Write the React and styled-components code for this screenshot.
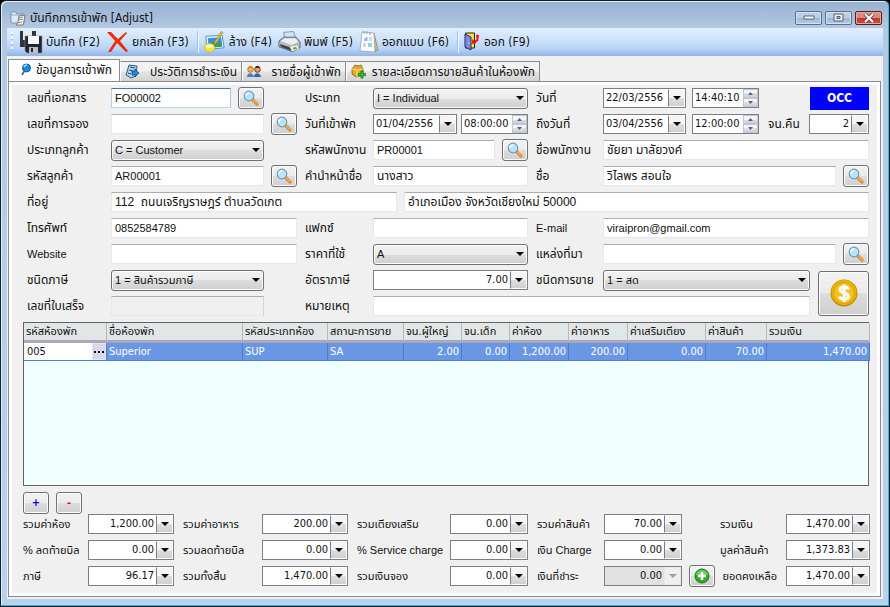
import React from 'react';
import styled, { createGlobalStyle, css } from 'styled-components';

const tahoma = "'DejaVu Sans Condensed', 'Noto Sans Thai', 'Noto Sans', sans-serif";
const arial = "'Liberation Sans', 'Noto Sans Thai', 'Noto Sans', sans-serif";

const GlobalStyle = createGlobalStyle`
  * {
    box-sizing: border-box;
  }

  body {
    margin: 0;
    background: #000;
    font-family: ${arial};
    font-size: 11px;
    line-height: 16px;
    color: #111;
  }

  button,
  input,
  select {
    margin: 0;
    padding: 0;
    border-radius: 0;
    font: inherit;
    color: inherit;
  }

  svg {
    display: block;
    flex: none;
  }
`;

const WindowFrame = styled.div`
  display: flex;
  flex-direction: column;
  min-height: 100vh;
  padding: 0 6px 7px;
  border: 1px solid #10202c;
  border-radius: 6px 6px 0 0;
  box-shadow: inset -1px -1px 0 #38b8d8, inset 1px 1px 0 #e4eef8;
  background: linear-gradient(#97b1d1, #b4cae3 28px, #b9d1ea);
`;

const TitleBar = styled.header`
  display: flex;
  align-items: center;
  gap: 4px;
  height: 27px;
  padding: 6px 1px 0 3px;

  h1 {
    flex: 1;
    margin: 0;
    font-family: ${tahoma};
    font-size: 12px;
    font-weight: normal;
    line-height: 16px;
    white-space: nowrap;
  }
`;

const CaptionButtons = styled.div`
  display: flex;
  gap: 3px;
`;

const CaptionButton = styled.button`
  display: flex;
  align-items: center;
  justify-content: center;
  width: 27px;
  height: 14px;
  border: 1px solid ${p => (p.$close ? '#5c1a1a' : '#56708f')};
  border-radius: 2px;
  box-shadow: inset 0 0 0 1px ${p => (p.$close ? '#e8a79d' : '#d3e1f0')};
  background: ${p =>
    p.$close
      ? 'linear-gradient(#d98b80 50%, #b93a2b 50%, #c8513d)'
      : 'linear-gradient(#bccfe4 50%, #9cb7d4 50%, #b5cce5)'};
`;

const Client = styled.main`
  flex: 1;
  display: flex;
  flex-direction: column;
  background: #f0f0f0;
`;

const Toolbar = styled.nav`
  display: flex;
  align-items: center;
  height: 28px;
  padding-left: 4px;
  background: linear-gradient(#e2efff, #c9dffa 50%, #b6d2f6 75%, #92b4e8);
`;

const Grip = styled.span`
  width: 2px;
  height: 20px;
  margin-right: 6px;
  background: repeating-linear-gradient(#f6faff 0 2px, #a7bcd9 2px 3px, transparent 3px 5px);
`;

const ToolDivider = styled.span`
  width: 1px;
  height: 22px;
  margin: 0 4px 0 3px;
  background: #f5f9ff;
  box-shadow: -1px 0 0 #a9c0e2;
`;

const ToolButton = styled.button`
  display: flex;
  align-items: center;
  gap: 3px;
  height: 26px;
  margin-right: 6px;
  border: 0;
  background: none;
  font-family: ${tahoma};
  font-size: 12px;
  white-space: nowrap;
`;

const TabStrip = styled.div`
  display: flex;
  align-items: flex-end;
  height: 25px;
  padding-left: 1px;
`;

const Tab = styled.button`
  display: flex;
  align-items: center;
  justify-content: space-between;
  width: ${p => p.$width}px;
  height: 20px;
  padding: 0 4px;
  border: 1px solid #898c95;
  border-left-color: #fff;
  border-bottom: 0;
  background: linear-gradient(#f2f2f2 45%, #e2e2e2 55%, #d3d3d3);
  font-family: ${tahoma};
  font-size: 12px;
  white-space: nowrap;

  ${p =>
    p.$active &&
    css`
      height: 23px;
      padding: 0 7px 2px 11px;
      margin-bottom: -1px;
      border-left-color: #898c95;
      background: #fff;
    `}
`;

const Panel = styled.section`
  flex: 1;
  display: flex;
  flex-direction: column;
  margin: 0 2px 2px 1px;
  padding: 2px 6px 7px 14px;
  border: 1px solid #898c95;
  box-shadow: inset 0 0 0 3px #fff;
`;

const Form = styled.form`
  display: grid;
  grid-template-columns: 84px 186fr 76px 155fr 75px 207fr 59px;
  grid-auto-rows: 26px;
  padding: 1px 5px 0 4px;
  margin-bottom: 3px;
`;

const Label = styled.label`
  align-self: center;
  padding-left: ${p => p.$indent || 0}px;
  font-size: ${p => (p.$latin ? 11 : 12)}px;
  white-space: nowrap;
`;

const Cell = styled.div`
  grid-column: ${p => p.$column};
  display: flex;
  align-items: center;
  gap: ${p => p.$gap || 7}px;
  padding-right: ${p => p.$end || 0}px;
  min-width: 0;
`;

const PushRight = styled.span`
  display: flex;
  margin-left: auto;
`;

const TextInput = styled.input`
  flex: 1;
  min-width: 0;
  height: 20px;
  padding: 0 3px;
  border: 1px solid #e3e9ef;
  border-top-color: #abadb3;
  background: #fff;
  font-size: ${p => (p.$thai ? 12 : 11)}px;

  &:disabled {
    background: #f0f0f0;
    border-right-color: #d0d5dc;
  }

  ${p =>
    p.$focused &&
    css`
      border-color: #3d7bad #a4c9e3 #b7d9ed #b5cfe7;
    `}
`;

const AddressLine = styled(TextInput)`
  flex: ${p => p.$grow} 1 0;
`;

const raised = css`
  border: 1px solid #707070;
  border-radius: 3px;
  box-shadow: inset 0 0 0 1px #fcfcfc;
  background: linear-gradient(#f2f2f2, #ebebeb 50%, #dddddd 50%, #cfcfcf);
`;

const PushButton = styled.button`
  ${raised}
  display: flex;
  align-items: center;
  justify-content: center;
  flex: none;
  width: 26px;
  height: 22px;
  font-family: ${tahoma};
  font-weight: bold;
  color: ${p => p.$color || '#111'};
`;

const MoneyButton = styled(PushButton)`
  grid-column: 7;
  grid-row: 8 / 10;
  place-self: center end;
  width: 51px;
  height: 45px;
`;

const SelectBox = styled.span`
  flex: 1;
  display: grid;
  min-width: 0;

  > * {
    grid-area: 1 / 1;
  }

  svg {
    place-self: center end;
    margin-right: 4px;
    pointer-events: none;
  }

  select {
    ${raised}
    appearance: none;
    min-width: 0;
    width: 100%;
    height: 21px;
    padding: 0 14px 0 3px;
  }
`;

const Combo = styled.span`
  flex: ${p => (p.$width ? 'none' : '1')};
  display: flex;
  width: ${p => (p.$width ? `${p.$width}px` : 'auto')};
  min-width: 0;
  height: 20px;
  border: 1px solid #7b7e89;
  background: #fff;
  font-family: ${tahoma};

  input {
    flex: 1;
    width: 0;
    min-width: 0;
    padding: 0 ${p => (p.$align ? 0 : 2)}px 0 2px;
    border: 0;
    background: none;
    text-align: ${p => p.$align || 'right'};
  }

  button {
    display: flex;
    align-items: center;
    justify-content: center;
    width: 17px;
    border: 1px solid #fff;
    border-left-color: #7b7e89;
    background: linear-gradient(#f5f5f5 50%, #dedede 50%, #d0d0d0);
  }

  ${p =>
    p.$off &&
    css`
      background: #e1e1e1;

      button {
        border-color: #e9e9e9;
        background: #efefef;
      }
    `}
`;

const Steps = styled.span`
  display: flex;
  flex-direction: column;
  width: 15px;

  && button {
    flex: 1;
    width: 100%;
    border: 1px solid #c3c6cf;
  }
`;

const Status = styled.output`
  width: 59px;
  height: 23px;
  margin-left: auto;
  background: #0000ff;
  color: #fff;
  font-family: ${tahoma};
  font-size: 12px;
  font-weight: bold;
  line-height: 23px;
  text-align: center;
`;

const GridArea = styled.div`
  flex: 1;
  min-height: 164px;
  margin-right: 5px;
  border: 1px solid #646464;
  background: #f0ffff;
`;

const RoomTable = styled.table`
  width: 100%;
  table-layout: fixed;
  border-spacing: 0;
  font-family: ${tahoma};

  th {
    height: 20px;
    padding: 0 2px;
    border-right: 1px solid #b5b9bd;
    border-bottom: 3px solid #aca8bb;
    background: #e1e6e7;
    font-weight: normal;
    text-align: left;
    white-space: nowrap;
  }

  td {
    height: 18px;
    padding: 0 2px;
    border-right: 1px solid #4f7dc9;
    border-bottom: 1px solid #4f7dc9;
    background: #6a97e5;
    color: #fff;
    line-height: 16px;
  }
`;

const NumberCell = styled.td`
  text-align: right;
`;

const EditCell = styled.div`
  display: flex;
  margin: 0 -2px;
  background: #fff;
  color: #111;

  input {
    flex: 1;
    width: 0;
    padding: 0 3px;
    border: 0;
    background: none;
  }

  button {
    display: flex;
    align-items: center;
    justify-content: center;
    width: 14px;
    height: 17px;
    border: 1px solid #e6e4f0;
    background: #d9d7e8;
  }
`;

const RowButtons = styled.div`
  display: flex;
  gap: 7px;
  padding: 6px 0 0;
`;

const Totals = styled.div`
  display: grid;
  grid-template-columns: 65px 86fr 88px 86fr 102px 78fr 76px 78fr 104px 84fr;
  grid-auto-rows: 26px;
  align-items: center;
  margin: -3px 4px 0 0;
`;

const TotalLabel = styled.div`
  display: flex;
  align-items: center;
  justify-content: space-between;
  padding: 0 ${p => p.$end || 0}px 0 ${p => p.$indent || 0}px;
  white-space: nowrap;
`;

const Arrow = ({ color = '#000' }) => (
  <svg width='8' height='4' viewBox='0 0 8 4'>
    <path d='M0 0h8L4 4z' fill={color} />
  </svg>
);

const Lens = () => (
  <svg width='16' height='16' viewBox='0 0 16 16'>
    <path d='M9.5 9.5l4.5 4.5' stroke='#e58a2e' strokeWidth='3.2' strokeLinecap='round' />
    <path d='M10 9.5l4 4' stroke='#ffd08a' strokeWidth='1' />
    <circle cx='6' cy='6' r='4.8' fill='#b8e4fa' stroke='#6d9cbe' strokeWidth='1.2' />
    <path d='M3 6a3 3 0 013-3' stroke='#fff' strokeWidth='1.5' fill='none' />
  </svg>
);

const WindowIcon = () => (
  <svg width='16' height='16' viewBox='0 0 16 16'>
    <path d='M1 2h5l1 2h7v9H1z' fill='#dceaf5' stroke='#7c94ab' />
    <path d='M1 5h13' stroke='#8eb2d0' />
    <path d='M9 6l6-1-1 6-1 4H6l2-3z' fill='#f7f7f7' stroke='#777' />
    <path d='M9 8l4-1M9 10l4-1M8 13l4-1' stroke='#8a8a8a' />
  </svg>
);

const SaveIcon = () => (
  <svg width='24' height='24' viewBox='0 0 24 24'>
    <path d='M1 1h16v16H1z' fill='#30343b' />
    <path d='M4 1h9v9H4z' fill='#e9edf2' />
    <path d='M6 6h17v17H8l-2-2z' fill='#23262c' stroke='#8a919b' strokeWidth='.6' />
    <path d='M9 6h11v8H9z' fill='#f7f9fb' />
    <path d='M10 17h9v6h-9z' fill='#b9c0c8' />
    <path d='M12 18h2v4h-2z' fill='#23262c' />
  </svg>
);

const CancelIcon = () => (
  <svg width='23' height='22' viewBox='0 0 23 22'>
    <path d='M1 1l4 0 7 7 8-7 1 1-7 8 8 10-2 1-9-9-6 9-3 0 7-11z' fill='#ee2d0c' />
  </svg>
);

const ClearIcon = () => (
  <svg width='23' height='24' viewBox='0 0 24 24'>
    <path d='M3 6l17-1 2 13-18 2z' fill='#e8f4ff' stroke='#5b8dba' />
    <path d='M5 8l14-1 1 9-14 2z' fill='#3592dd' />
    <path d='M6 15l5-4 3 3 5-2 1 5-14 1z' fill='#3a9a58' />
    <path d='M19 1l2 1-7 11-3 2 1-3z' fill='#e8b73c' stroke='#8d7327' strokeWidth='.5' />
    <ellipse cx='7' cy='18' rx='5.5' ry='4.5' fill='#f8e43c' stroke='#c9a911' strokeWidth='.6' />
    <ellipse cx='7' cy='16.5' rx='4' ry='1.8' fill='#fffbbd' />
  </svg>
);

const PrintIcon = () => (
  <svg width='23' height='22' viewBox='0 0 24 22'>
    <path d='M6 1l10-1 3 8H7z' fill='#cfe5fa' stroke='#8496a8' />
    <path d='M1 10l5-4h13l4 5v6l-8 4-14-5z' fill='#b9bdc2' stroke='#62676d' />
    <path d='M3 10l4-3h11l3 4-7 3z' fill='#eceef0' />
    <path d='M2 13l12 4v3L3 16z' fill='#3b4147' />
    <path d='M12 16l8-2 2 4-7 3z' fill='#fff' stroke='#888' strokeWidth='.5' />
    <path d='M15 17l4-1 1 2-4 1z' fill='#4fae45' />
  </svg>
);

const DesignIcon = () => (
  <svg width='20' height='22' viewBox='0 0 20 22'>
    <path d='M15 2l4 17-4 2z' fill='#c7b48c' stroke='#81745a' strokeWidth='.6' />
    <path d='M3 1l12 1 1 19-15-1z' fill='#fcfdff' stroke='#98a3b3' strokeWidth='.8' />
    <path d='M5 0v3M8 0v3M11 1v3' stroke='#888' strokeWidth='.8' />
    <path d='M5 10a3.500 3.500 0 013.500-4v4z' fill='#9fb0ee' />
    <path d='M10 7h3M10 9h3M4 13h3M4 15h3' stroke='#a7aee0' />
    <path d='M9 12h4v4H9z' fill='#8fd3dd' />
  </svg>
);

const ExitIcon = () => (
  <svg width='18' height='20' viewBox='0 0 17 20'>
    <path d='M2 1h9v15H2z' fill='#ffe42c' stroke='#222' />
    <path d='M1.500 2l6 3v13l-6-3z' fill='#8088e4' stroke='#25285e' />
    <path d='M5 11h1' stroke='#fff' />
    <path d='M14 4v4l-4 3' stroke='#ed1515' strokeWidth='2' fill='none' />
    <path d='M8 12l1-5 4 4z' fill='#ed1515' />
    <circle cx='14' cy='4' r='1.500' fill='#ed1515' />
  </svg>
);

const PinIcon = () => (
  <svg width='12' height='14' viewBox='0 0 12 14'>
    <path d='M5 7l-3 5' stroke='#555' strokeWidth='1.500' />
    <circle cx='6.500' cy='5' r='4' fill='#168be0' stroke='#0c60a8' />
    <path d='M4 4a3 3 0 013-2' stroke='#bdeaff' strokeWidth='1.500' fill='none' />
  </svg>
);

const HistoryIcon = () => (
  <svg width='15' height='15' viewBox='0 0 15 15'>
    <path d='M4 1l8 1-1 10-5 2-5-3z' fill='#a9d3f1' stroke='#315f86' />
    <path d='M5 3l5 1M4 6l4 1M3 9l3 1' stroke='#235178' />
    <path d='M14 9l-4-4v2H7v4h3v2z' fill='#2486d4' stroke='#123f6b' strokeWidth='.7' />
  </svg>
);

const PeopleIcon = () => (
  <svg width='14' height='13' viewBox='0 0 14 13'>
    <path d='M0 12c0-5 6-5 7 0z' fill='#4b80c4' />
    <path d='M7 12c0-5 6-5 7 0z' fill='#3165ae' />
    <circle cx='3.500' cy='4.500' r='2.800' fill='#f5b456' stroke='#a26012' strokeWidth='.8' />
    <circle cx='10.500' cy='4.500' r='2.800' fill='#eaa25b' stroke='#3e2811' strokeWidth='.8' />
    <path d='M1 3c1-3 4-3 5 0z' fill='#d88717' />
    <path d='M8 3c1-3 4-3 5 0z' fill='#3e2811' />
  </svg>
);

const BoxIcon = () => (
  <svg width='15' height='15' viewBox='0 0 15 15'>
    <path d='M1 5l3-4 3 1 3-1 2 4v6l-7 2-4-3z' fill='#e5a92d' stroke='#80570f' strokeWidth='.8' />
    <path d='M1 5l5 1 6-1M6 6v7' stroke='#ffe091' fill='none' />
    <path d='M10 7h2v2.500h2.500v2H12V14h-2v-2.500H7.500v-2H10z' fill='#2ccc2a' stroke='#08720b' strokeWidth='.8' />
  </svg>
);

const CoinIcon = () => (
  <svg width='28' height='28' viewBox='0 0 28 28'>
    <circle cx='14' cy='14' r='13.500' fill='#c58a00' />
    <circle cx='14' cy='13.500' r='12.500' fill='#eeb509' />
    <circle cx='14' cy='14' r='10.500' fill='#f3c020' stroke='#dda000' />
    <path
      d='M18.500 10.500c-.5-3.300-8.500-3.300-8.500.3 0 4 8.500 2.300 8.500 6.500 0 4-8.500 3.800-9 .2M14.200 5.500v17.500'
      stroke='#fff'
      strokeWidth='3'
      fill='none'
    />
  </svg>
);

const AddIcon = () => (
  <svg width='16' height='16' viewBox='0 0 16 16'>
    <circle cx='8' cy='8' r='7' fill='#34a829' stroke='#157914' />
    <path d='M2 7a6 5 0 0112 0z' fill='#70cc5f' />
    <path d='M8 4v8M4 8h8' stroke='#fff' strokeWidth='2.500' />
  </svg>
);

const Search = ({ name }) => (
  <PushButton type='button' aria-label={`Search ${name}`}>
    <Lens />
  </PushButton>
);

const Select = ({ id, value }) => (
  <SelectBox>
    <select id={id}>
      <option>{value}</option>
    </select>
    <Arrow />
  </SelectBox>
);

const DropField = ({ id, value, width, align, off }) => (
  <Combo $width={width} $align={align} $off={off}>
    <input id={id} defaultValue={value} readOnly={off} />
    <button type='button' disabled={off} aria-label='Open'>
      <Arrow color={off ? '#a0a0a0' : '#000'} />
    </button>
  </Combo>
);

const TimeField = ({ value, label }) => (
  <Combo $width={67} $align='left'>
    <input defaultValue={value} aria-label={label} />
    <Steps>
      <button type='button' aria-label='Up'>
        <svg width='5' height='3' viewBox='0 0 5 3'>
          <path d='M0 3h5L2.500 0z' fill='#4c62b0' />
        </svg>
      </button>
      <button type='button' aria-label='Down'>
        <svg width='5' height='3' viewBox='0 0 5 3'>
          <path d='M0 0h5L2.500 3z' fill='#4c62b0' />
        </svg>
      </button>
    </Steps>
  </Combo>
);

const tools = [
  { text: 'บันทึก (F2)', icon: <SaveIcon /> },
  { text: 'ยกเลิก (F3)', icon: <CancelIcon /> },
  { text: 'ล้าง (F4)', icon: <ClearIcon />, divided: true },
  { text: 'พิมพ์ (F5)', icon: <PrintIcon /> },
  { text: 'ออกแบบ (F6)', icon: <DesignIcon /> },
  { text: 'ออก (F9)', icon: <ExitIcon />, divided: true },
];

const tabs = [
  { text: 'ข้อมูลการเข้าพัก', icon: <PinIcon />, width: 112 },
  { text: 'ประวัติการชำระเงิน', icon: <HistoryIcon />, width: 122 },
  { text: 'รายชื่อผู้เข้าพัก', icon: <PeopleIcon />, width: 104 },
  { text: 'รายละเอียดการขายสินค้าในห้องพัก', icon: <BoxIcon />, width: 194 },
];

const columns = [
  { title: 'รหัสห้องพัก', width: 83 },
  { title: 'ชื่อห้องพัก', width: 136, value: 'Superior' },
  { title: 'รหัสประเภทห้อง', width: 85, value: 'SUP' },
  { title: 'สถานะการขาย', width: 76, value: 'SA' },
  { title: 'จน.ผู้ใหญ่', width: 58, value: '2.00', number: true },
  { title: 'จน.เด็ก', width: 48, value: '0.00', number: true },
  { title: 'ค่าห้อง', width: 59, value: '1,200.00', number: true },
  { title: 'ค่าอาหาร', width: 59, value: '200.00', number: true },
  { title: 'ค่าเสริมเตียง', width: 78, value: '0.00', number: true },
  { title: 'ค่าสินค้า', width: 61, value: '70.00', number: true },
  { title: 'รวมเงิน', width: 103, value: '1,470.00', number: true },
];

const totals = [
  ['รวมค่าห้อง', '1,200.00'],
  ['รวมค่าอาหาร', '200.00'],
  ['รวมเตียงเสริม', '0.00'],
  ['รวมค่าสินค้า', '70.00'],
  ['รวมเงิน', '1,470.00'],
  ['% ลดท้ายบิล', '0.00'],
  ['รวมลดท้ายบิล', '0.00'],
  ['% Service charge', '0.00'],
  ['เงิน Charge', '0.00'],
  ['มูลค่าสินค้า', '1,373.83'],
  ['ภาษี', '96.17'],
  ['รวมทั้งสิ้น', '1,470.00'],
  ['รวมเงินจอง', '0.00'],
  ['เงินที่ชำระ', '0.00', true],
  ['ยอดคงเหลือ', '1,470.00'],
];

const StayForm = () => (
  <Form>
    <Label htmlFor='doc'>เลขที่เอกสาร</Label>
    <Cell $column='2' $end={33}>
      <TextInput id='doc' defaultValue='FO00002' $focused />
      <Search name='document' />
    </Cell>
    <Label htmlFor='kind' $indent={8}>ประเภท</Label>
    <Cell $column='4'>
      <Select id='kind' value='I = Individual' />
    </Cell>
    <Label htmlFor='date' $indent={8}>วันที่</Label>
    <Cell $column='6 / 8' $gap={6}>
      <DropField id='date' value='22/03/2556' width={83} align='left' />
      <TimeField value='14:40:10' label='Time' />
      <Status>OCC</Status>
    </Cell>

    <Label htmlFor='booking'>เลขที่การจอง</Label>
    <Cell $column='2'>
      <TextInput id='booking' />
      <Search name='booking' />
    </Cell>
    <Label htmlFor='checkin' $indent={8}>วันที่เข้าพัก</Label>
    <Cell $column='4' $gap={4}>
      <DropField id='checkin' value='01/04/2556' align='left' />
      <TimeField value='08:00:00' label='Check-in time' />
    </Cell>
    <Label htmlFor='until' $indent={8}>ถึงวันที่</Label>
    <Cell $column='6 / 8' $gap={6}>
      <DropField id='until' value='03/04/2556' width={83} align='left' />
      <TimeField value='12:00:00' label='Check-out time' />
      <Label htmlFor='nights' $indent={3}>จน.คืน</Label>
      <PushRight>
        <DropField id='nights' value='2' width={60} />
      </PushRight>
    </Cell>

    <Label htmlFor='custType'>ประเภทลูกค้า</Label>
    <Cell $column='2' $end={33}>
      <Select id='custType' value='C = Customer' />
    </Cell>
    <Label htmlFor='staff' $indent={8}>รหัสพนักงาน</Label>
    <Cell $column='4'>
      <TextInput id='staff' defaultValue='PR00001' />
      <Search name='staff' />
    </Cell>
    <Label htmlFor='staffName' $indent={8}>ชื่อพนักงาน</Label>
    <Cell $column='6 / 8'>
      <TextInput id='staffName' defaultValue='ชัยยา มาลัยวงค์' $thai />
    </Cell>

    <Label htmlFor='custCode'>รหัสลูกค้า</Label>
    <Cell $column='2'>
      <TextInput id='custCode' defaultValue='AR00001' />
      <Search name='customer' />
    </Cell>
    <Label htmlFor='prefix' $indent={8}>คำนำหน้าชื่อ</Label>
    <Cell $column='4'>
      <TextInput id='prefix' defaultValue='นางสาว' $thai />
    </Cell>
    <Label htmlFor='name' $indent={8}>ชื่อ</Label>
    <Cell $column='6 / 8'>
      <TextInput id='name' defaultValue='วิไลพร สอนใจ' $thai />
      <Search name='name' />
    </Cell>

    <Label htmlFor='address'>ที่อยู่</Label>
    <Cell $column='2 / 8'>
      <AddressLine id='address' $grow={284} defaultValue='112  ถนนเจริญราษฎร์ ตำบลวัดเกต' $thai />
      <AddressLine
        $grow={467}
        aria-label='Address line 2'
        defaultValue='อำเภอเมือง จังหวัดเชียงใหม่ 50000'
        $thai
      />
    </Cell>

    <Label htmlFor='phone'>โทรศัพท์</Label>
    <Cell $column='2'>
      <TextInput id='phone' defaultValue='0852584789' />
    </Cell>
    <Label htmlFor='fax' $indent={8}>แฟกซ์</Label>
    <Cell $column='4'>
      <TextInput id='fax' />
    </Cell>
    <Label htmlFor='email' $indent={8} $latin>E-mail</Label>
    <Cell $column='6 / 8'>
      <TextInput id='email' defaultValue='viraipron@gmail.com' />
    </Cell>

    <Label htmlFor='website' $latin>Website</Label>
    <Cell $column='2'>
      <TextInput id='website' />
    </Cell>
    <Label htmlFor='price' $indent={8}>ราคาที่ใช้</Label>
    <Cell $column='4'>
      <Select id='price' value='A' />
    </Cell>
    <Label htmlFor='source' $indent={8}>แหล่งที่มา</Label>
    <Cell $column='6 / 8'>
      <TextInput id='source' />
      <Search name='source' />
    </Cell>

    <Label htmlFor='taxType'>ชนิดภาษี</Label>
    <Cell $column='2' $end={33}>
      <Select id='taxType' value='1 = สินค้ารวมภาษี' />
    </Cell>
    <Label htmlFor='taxRate' $indent={8}>อัตราภาษี</Label>
    <Cell $column='4'>
      <DropField id='taxRate' value='7.00' />
    </Cell>
    <Label htmlFor='saleType' $indent={8}>ชนิดการขาย</Label>
    <Cell $column='6'>
      <Select id='saleType' value='1 = สด' />
    </Cell>
    <MoneyButton type='button' aria-label='Payment'>
      <CoinIcon />
    </MoneyButton>

    <Label htmlFor='receipt'>เลขที่ใบเสร็จ</Label>
    <Cell $column='2' $end={33}>
      <TextInput id='receipt' disabled />
    </Cell>
    <Label htmlFor='remark' $indent={8}>หมายเหตุ</Label>
    <Cell $column='4 / 7'>
      <TextInput id='remark' />
    </Cell>
  </Form>
);

const App = () => (
  <>
    <GlobalStyle />
    <WindowFrame>
      <TitleBar>
        <WindowIcon />
        <h1>บันทึกการเข้าพัก [Adjust]</h1>
        <CaptionButtons>
          <CaptionButton aria-label='Minimize'>
            <svg width='12' height='5' viewBox='0 0 12 5'>
              <path d='M1 1h10v3H1z' fill='#fff' stroke='#59606c' />
            </svg>
          </CaptionButton>
          <CaptionButton aria-label='Maximize'>
            <svg width='11' height='9' viewBox='0 0 11 9'>
              <path d='M1 1h9v7H1z' fill='#e9edf2' stroke='#59606c' />
              <path d='M4 3.500h3v2H4z' fill='#a9bfd8' stroke='#59606c' />
            </svg>
          </CaptionButton>
          <CaptionButton $close aria-label='Close'>
            <svg width='12' height='10' viewBox='0 0 12 10'>
              <path d='M2 1l8 8M10 1l-8 8' stroke='#5b3640' strokeWidth='3.600' />
              <path d='M2 1l8 8M10 1l-8 8' stroke='#fff' strokeWidth='2.200' />
            </svg>
          </CaptionButton>
        </CaptionButtons>
      </TitleBar>

      <Client>
        <Toolbar>
          <Grip />
          {tools.map(tool => (
            <React.Fragment key={tool.text}>
              {tool.divided && <ToolDivider />}
              <ToolButton type='button'>
                {tool.icon}
                {tool.text}
              </ToolButton>
            </React.Fragment>
          ))}
        </Toolbar>

        <TabStrip role='tablist'>
          {tabs.map((tab, i) => (
            <Tab key={tab.text} role='tab' aria-selected={i === 0} $active={i === 0} $width={tab.width}>
              {tab.icon}
              {tab.text}
            </Tab>
          ))}
        </TabStrip>

        <Panel>
          <StayForm />

          <GridArea>
            <RoomTable>
              <colgroup>
                {columns.map(col => (
                  <col key={col.title} width={col.width} />
                ))}
              </colgroup>
              <thead>
                <tr>
                  {columns.map(col => (
                    <th key={col.title}>{col.title}</th>
                  ))}
                </tr>
              </thead>
              <tbody>
                <tr>
                  <td>
                    <EditCell>
                      <input defaultValue='005' aria-label='Room' />
                      <button type='button' aria-label='Pick room'>
                        <svg width='10' height='2' viewBox='0 0 10 2'>
                          <path d='M0 0h2v2H0zM4 0h2v2H4zM8 0h2v2H8z' />
                        </svg>
                      </button>
                    </EditCell>
                  </td>
                  {columns.slice(1).map(col =>
                    col.number ? (
                      <NumberCell key={col.title}>{col.value}</NumberCell>
                    ) : (
                      <td key={col.title}>{col.value}</td>
                    )
                  )}
                </tr>
              </tbody>
            </RoomTable>
          </GridArea>

          <RowButtons>
            <PushButton type='button' $color='#0000ff'>+</PushButton>
            <PushButton type='button' $color='#ff0000'>-</PushButton>
          </RowButtons>

          <Totals>
            {totals.map(([title, value, off], i) => (
              <React.Fragment key={title}>
                <TotalLabel $indent={i % 5 === 4 ? (i === 14 ? 7 : 38) : i % 5 ? 9 : 0} $end={9}>
                  {i === 14 && (
                    <PushButton type='button' aria-label='Add payment'>
                      <AddIcon />
                    </PushButton>
                  )}
                  <label htmlFor={`total${i}`}>{title}</label>
                </TotalLabel>
                <DropField id={`total${i}`} value={value} off={off} />
              </React.Fragment>
            ))}
          </Totals>
        </Panel>
      </Client>
    </WindowFrame>
  </>
);

export default App;
